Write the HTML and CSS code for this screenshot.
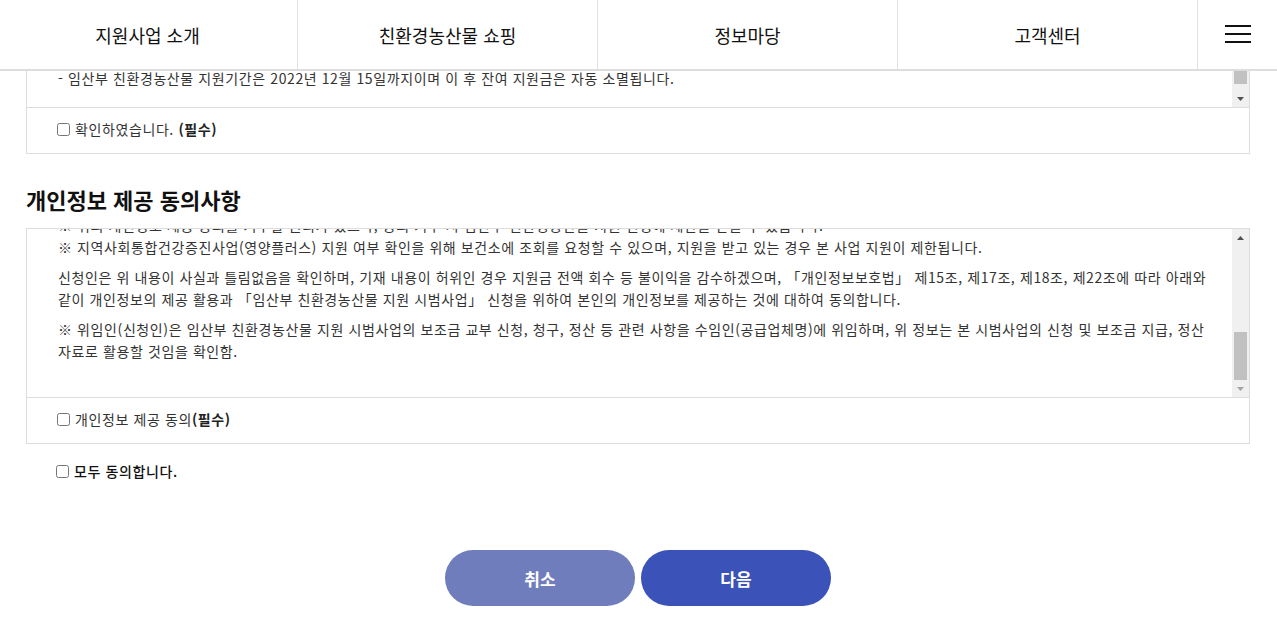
FILE: index.html
```html
<!doctype html>
<html lang="ko">
<head>
    <meta charset="utf-8">
    <title>임산부 친환경농산물 지원 신청 - 약관 동의</title>
    <link rel="stylesheet" href="styles.css">
</head>
<body>
    <!-- 상단 고정 메뉴 -->
    <header class="gnb">
        <nav class="gnb-menu">
            <a class="gnb-item" href="#">지원사업 소개</a>
            <a class="gnb-item" href="#">친환경농산물 쇼핑</a>
            <a class="gnb-item" href="#">정보마당</a>
            <a class="gnb-item" href="#">고객센터</a>
        </nav>
        <button class="gnb-all" type="button" aria-label="전체메뉴">
            <span></span><span></span><span></span>
        </button>
    </header>

    <main class="agree">
        <!-- 지원사업 유의사항 -->
        <section class="terms">
            <div class="terms-box">
                <div class="terms-view terms-view-notice">
                    <p>- 지원금은 임산부 본인 명의의 회원 계정으로만 사용할 수 있으며 타인에게 양도할 수 없습니다.</p>
                    <p>- 임산부 친환경농산물 지원기간은 2022년 12월 15일까지이며 이 후 잔여 지원금은 자동 소멸됩니다.</p>
                </div>
                <div class="scrollbar">
                    <span class="scrollbar-btn">
                        <svg width="7" height="4" viewBox="0 0 7 4"><path d="M0 4h7L3.5 0z"/></svg>
                    </span>
                    <span class="scrollbar-track">
                        <span class="scrollbar-thumb scrollbar-thumb-notice"></span>
                    </span>
                    <span class="scrollbar-btn">
                        <svg width="7" height="4" viewBox="0 0 7 4"><path d="M0 0h7L3.5 4z"/></svg>
                    </span>
                </div>
            </div>
            <label class="terms-check">
                <input type="checkbox"><span>확인하였습니다. <b>(필수)</b></span>
            </label>
        </section>

        <h2 class="terms-title">개인정보 제공 동의사항</h2>

        <!-- 개인정보 제공 동의 -->
        <section class="terms">
            <div class="terms-box">
                <div class="terms-view terms-view-privacy">
                    <p>※ 개인정보 제공에 동의하지 않을 경우 임산부 친환경농산물 지원사업의 대상자 선정 및 지원을 받으실 수 없습니다.</p>
                    <ul class="terms-note">
                        <li>※ 위의 개인정보 제공 동의를 거부할 권리가 있으나, 동의 거부 시 임산부 친환경농산물 지원 신청에 제한을 받을 수 있습니다.</li>
                        <li>※ 지역사회통합건강증진사업(영양플러스) 지원 여부 확인을 위해 보건소에 조회를 요청할 수 있으며, 지원을 받고 있는 경우 본 사업 지원이 제한됩니다.</li>
                    </ul>
                    <p>신청인은 위 내용이 사실과 틀림없음을 확인하며, 기재 내용이 허위인 경우 지원금 전액 회수 등 불이익을 감수하겠으며, 「개인정보보호법」 제15조, 제17조, 제18조, 제22조에 따라 아래와 같이 개인정보의 제공 활용과 「임산부 친환경농산물 지원 시범사업」 신청을 위하여 본인의 개인정보를 제공하는 것에 대하여 동의합니다.</p>
                    <p>※ 위임인(신청인)은 임산부 친환경농산물 지원 시범사업의 보조금 교부 신청, 청구, 정산 등 관련 사항을 수임인(공급업체명)에 위임하며, 위 정보는 본 시범사업의 신청 및 보조금 지급, 정산 자료로 활용할 것임을 확인함.</p>
                </div>
                <div class="scrollbar">
                    <span class="scrollbar-btn">
                        <svg width="7" height="4" viewBox="0 0 7 4"><path d="M0 4h7L3.5 0z"/></svg>
                    </span>
                    <span class="scrollbar-track">
                        <span class="scrollbar-thumb"></span>
                    </span>
                    <span class="scrollbar-btn scrollbar-btn-off">
                        <svg width="7" height="4" viewBox="0 0 7 4"><path d="M0 0h7L3.5 4z"/></svg>
                    </span>
                </div>
            </div>
            <label class="terms-check">
                <input type="checkbox"><span>개인정보 제공 동의<b>(필수)</b></span>
            </label>
        </section>

        <label class="agree-all">
            <input type="checkbox"><span>모두 동의합니다.</span>
        </label>

        <div class="btn-area">
            <button class="btn btn-cancel" type="button">취소</button>
            <button class="btn btn-next" type="button">다음</button>
        </div>
    </main>
</body>
</html>
```

FILE: styles.css
```css
/* 기본 */
body {
    margin: 0;
    font-family: "Noto Sans CJK KR", "Noto Sans", sans-serif;
    color: #333;
    background: #fff;
}

a {
    color: inherit;
    text-decoration: none;
}

/* 상단 메뉴 - 스크롤 시 내용 위에 고정 */
.gnb {
    position: fixed;
    top: 0;
    left: 0;
    right: 0;
    z-index: 10;
    display: flex;
    height: 69px;
    background: #fff;
    border-bottom: 2px solid #ddd;
}

.gnb-menu {
    display: flex;
    margin-left: -2px;
}

.gnb-item {
    display: flex;
    align-items: center;
    justify-content: center;
    width: 299px;
    border-right: 1px solid #e1e1e1;
    font-size: 18px;
    color: #111;
}

.gnb-all {
    flex: 1;
    display: flex;
    flex-direction: column;
    align-items: center;
    justify-content: center;
    gap: 6px;
    padding: 0 0 1px;
    border: 0;
    background: none;
}

.gnb-all span {
    width: 26px;
    height: 2px;
    background: #111;
}

/* 약관 영역 */
.agree {
    padding: 6px 27px 35px 26px;
}

.terms {
    border: 1px solid #ddd;
}

.terms-box {
    display: flex;
}

/* 내용은 맨 아래까지 스크롤된 상태 */
.terms-view {
    flex: 1;
    display: flex;
    flex-direction: column;
    justify-content: flex-end;
    overflow: hidden;
    padding: 0 4px 0 31px;
    font-size: 14px;
    line-height: 22px;
    letter-spacing: 0.6px;
    word-break: keep-all;
}

.terms-view p {
    margin: 0 0 8px;
}

.terms-view p:last-child {
    margin-bottom: 0;
}

.terms-view-notice {
    height: 100px;
    padding-bottom: 18px;
    box-sizing: border-box;
}

.terms-view-privacy {
    height: 168px;
    padding-bottom: 35px;
    box-sizing: border-box;
}

.terms-note {
    margin: 0 0 8px;
    padding: 0;
    list-style: none;
}

/* 스크롤바 */
.scrollbar {
    display: flex;
    flex-direction: column;
    width: 17px;
    background: #f0f0f0;
}

.scrollbar-btn {
    display: flex;
    align-items: center;
    justify-content: center;
    height: 17px;
    fill: #505050;
}

.scrollbar-btn-off {
    fill: #a3a3a3;
}

.scrollbar-track {
    flex: 1;
    display: flex;
    flex-direction: column;
    justify-content: flex-end;
    padding: 0 2px;
}

.scrollbar-thumb {
    height: 48px;
    background: #c1c1c1;
}

.scrollbar-thumb-notice {
    height: 30px;
    margin-bottom: 6px;
}

/* 체크 */
.terms-check {
    display: flex;
    align-items: center;
    height: 42px;
    padding: 0 0 3px 30px;
    border-top: 1px solid #ddd;
    font-size: 14px;
    letter-spacing: 0.6px;
    color: #333;
}

.terms-check input,
.agree-all input {
    width: 13px;
    height: 13px;
    margin: 0 5px 0 0;
}

.terms-check b {
    font-weight: 700;
    color: #222;
}

.terms-title {
    margin: 32px 0 16px;
    font-size: 22px;
    line-height: 26px;
    font-weight: 700;
    color: #111;
}

.agree-all {
    display: flex;
    align-items: center;
    height: 20px;
    margin-top: 17px;
    padding-left: 30px;
    font-size: 14px;
    font-weight: 500;
    letter-spacing: 0.6px;
    color: #111;
}

/* 버튼 */
.btn-area {
    display: flex;
    justify-content: center;
    gap: 6px;
    margin-top: 69px;
}

.btn {
    width: 190px;
    height: 56px;
    border: 0;
    border-radius: 28px;
    font-family: inherit;
    font-size: 17px;
    font-weight: 700;
    color: #fff;
}

.btn-cancel {
    background: #6f7dbd;
}

.btn-next {
    background: #3b52b9;
}
```
